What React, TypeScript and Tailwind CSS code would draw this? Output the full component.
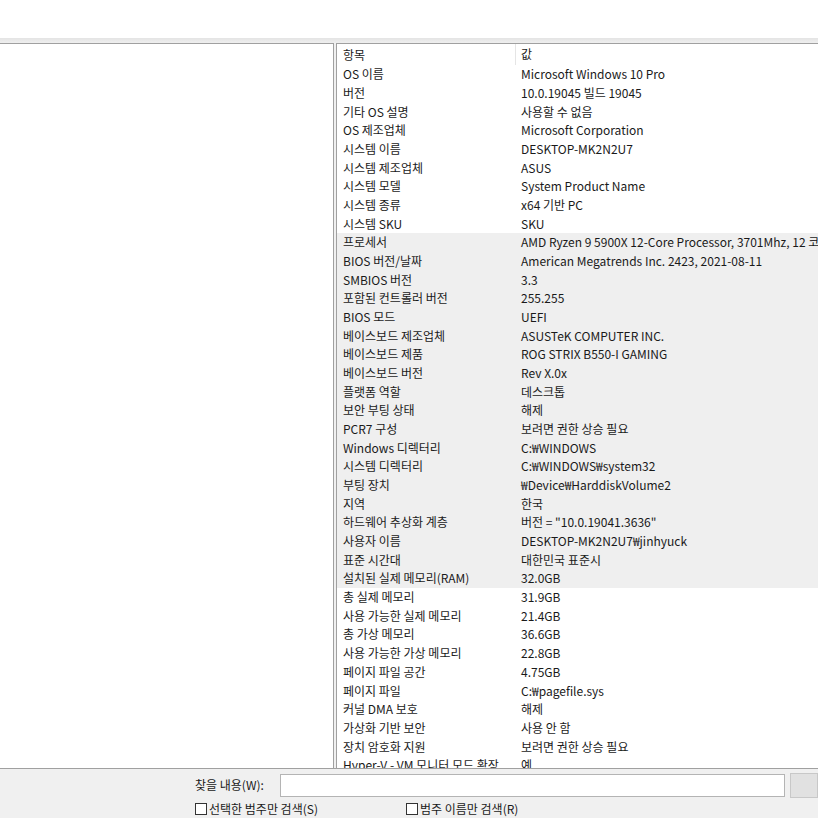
const rows: Array<[string, string]> = [
  ["OS 이름", "Microsoft Windows 10 Pro"],
  ["버전", "10.0.19045 빌드 19045"],
  ["기타 OS 설명", "사용할 수 없음"],
  ["OS 제조업체", "Microsoft Corporation"],
  ["시스템 이름", "DESKTOP-MK2N2U7"],
  ["시스템 제조업체", "ASUS"],
  ["시스템 모델", "System Product Name"],
  ["시스템 종류", "x64 기반 PC"],
  ["시스템 SKU", "SKU"],
  ["프로세서", "AMD Ryzen 9 5900X 12-Core Processor, 3701Mhz, 12 코어, 24 논리 프로세서"],
  ["BIOS 버전/날짜", "American Megatrends Inc. 2423, 2021-08-11"],
  ["SMBIOS 버전", "3.3"],
  ["포함된 컨트롤러 버전", "255.255"],
  ["BIOS 모드", "UEFI"],
  ["베이스보드 제조업체", "ASUSTeK COMPUTER INC."],
  ["베이스보드 제품", "ROG STRIX B550-I GAMING"],
  ["베이스보드 버전", "Rev X.0x"],
  ["플랫폼 역할", "데스크톱"],
  ["보안 부팅 상태", "해제"],
  ["PCR7 구성", "보려면 권한 상승 필요"],
  ["Windows 디렉터리", "C:₩WINDOWS"],
  ["시스템 디렉터리", "C:₩WINDOWS₩system32"],
  ["부팅 장치", "₩Device₩HarddiskVolume2"],
  ["지역", "한국"],
  ["하드웨어 추상화 계층", "버전 = \"10.0.19041.3636\""],
  ["사용자 이름", "DESKTOP-MK2N2U7₩jinhyuck"],
  ["표준 시간대", "대한민국 표준시"],
  ["설치된 실제 메모리(RAM)", "32.0GB"],
  ["총 실제 메모리", "31.9GB"],
  ["사용 가능한 실제 메모리", "21.4GB"],
  ["총 가상 메모리", "36.6GB"],
  ["사용 가능한 가상 메모리", "22.8GB"],
  ["페이지 파일 공간", "4.75GB"],
  ["페이지 파일", "C:₩pagefile.sys"],
  ["커널 DMA 보호", "해제"],
  ["가상화 기반 보안", "사용 안 함"],
  ["장치 암호화 지원", "보려면 권한 상승 필요"],
  ["Hyper-V - VM 모니터 모드 확장", "예"],
];

const Row = ({ item, value, selected }: { item: string; value: string; selected: boolean }) => {
  return (
    <div className={`flex h-[18.68px] shrink-0 items-center whitespace-nowrap ${selected ? "bg-[#efefef]" : ""}`}>
      <div className="w-[178px] shrink-0 pl-[6px]">{item}</div>
      <div className="pl-[6px]">{value}</div>
    </div>
  );
};

const Checkbox = ({ label }: { label: string }) => {
  return (
    <label className="flex items-center gap-[2px]">
      <span className="h-[12px] w-[12px] border border-[#333] bg-white" />
      <span>{label}</span>
    </label>
  );
};

export default function App() {
  return (
    <div
      className="flex h-[818px] w-[818px] flex-col overflow-hidden bg-white text-[12px] text-[#1a1a1a]"
      style={{ fontFamily: '"Noto Sans CJK KR", "Noto Sans", sans-serif' }}
    >
      <div className="h-[38px] shrink-0 bg-white" />
      <div className="h-[5px] shrink-0 bg-gradient-to-b from-[#e4e4e4] to-[#efefef]" />

      <div className="flex min-h-0 flex-1 bg-[#f0f0f0]">
        <div className="w-[334px] shrink-0 border-r border-t border-[#a0a0a0] bg-white" />
        <div className="ml-[2px] flex min-w-0 flex-1 flex-col overflow-hidden border-l border-t border-[#a0a0a0] bg-white">
          <div className="flex h-[21px] shrink-0 items-center whitespace-nowrap">
            <div className="w-[178px] shrink-0 pl-[6px]">항목</div>
            <div className="h-full border-l border-[#e5e5e5] pl-[5px] pt-[1px]">값</div>
          </div>
          {rows.map(([item, value], i) => (
            <Row key={item} item={item} value={value} selected={i >= 9 && i <= 27} />
          ))}
        </div>
      </div>

      <div className="flex h-[50px] shrink-0 flex-col border-t border-[#a0a0a0] bg-[#f0f0f0]">
        <div className="mt-[4px] flex h-[24px] items-center">
          <div className="w-[195px] shrink-0" />
          <div className="w-[85px] shrink-0">찾을 내용(W):</div>
          <div className="h-[23px] w-[505px] shrink-0 border border-[#b4b4b4] bg-white" />
          <div className="ml-[5px] h-[25px] flex-1 border border-[#c8c8c8] bg-[#e1e1e1]" />
        </div>
        <div className="mt-[3px] flex items-center">
          <div className="w-[195px] shrink-0" />
          <div className="w-[211px] shrink-0">
            <Checkbox label="선택한 범주만 검색(S)" />
          </div>
          <Checkbox label="범주 이름만 검색(R)" />
        </div>
      </div>
    </div>
  );
}
